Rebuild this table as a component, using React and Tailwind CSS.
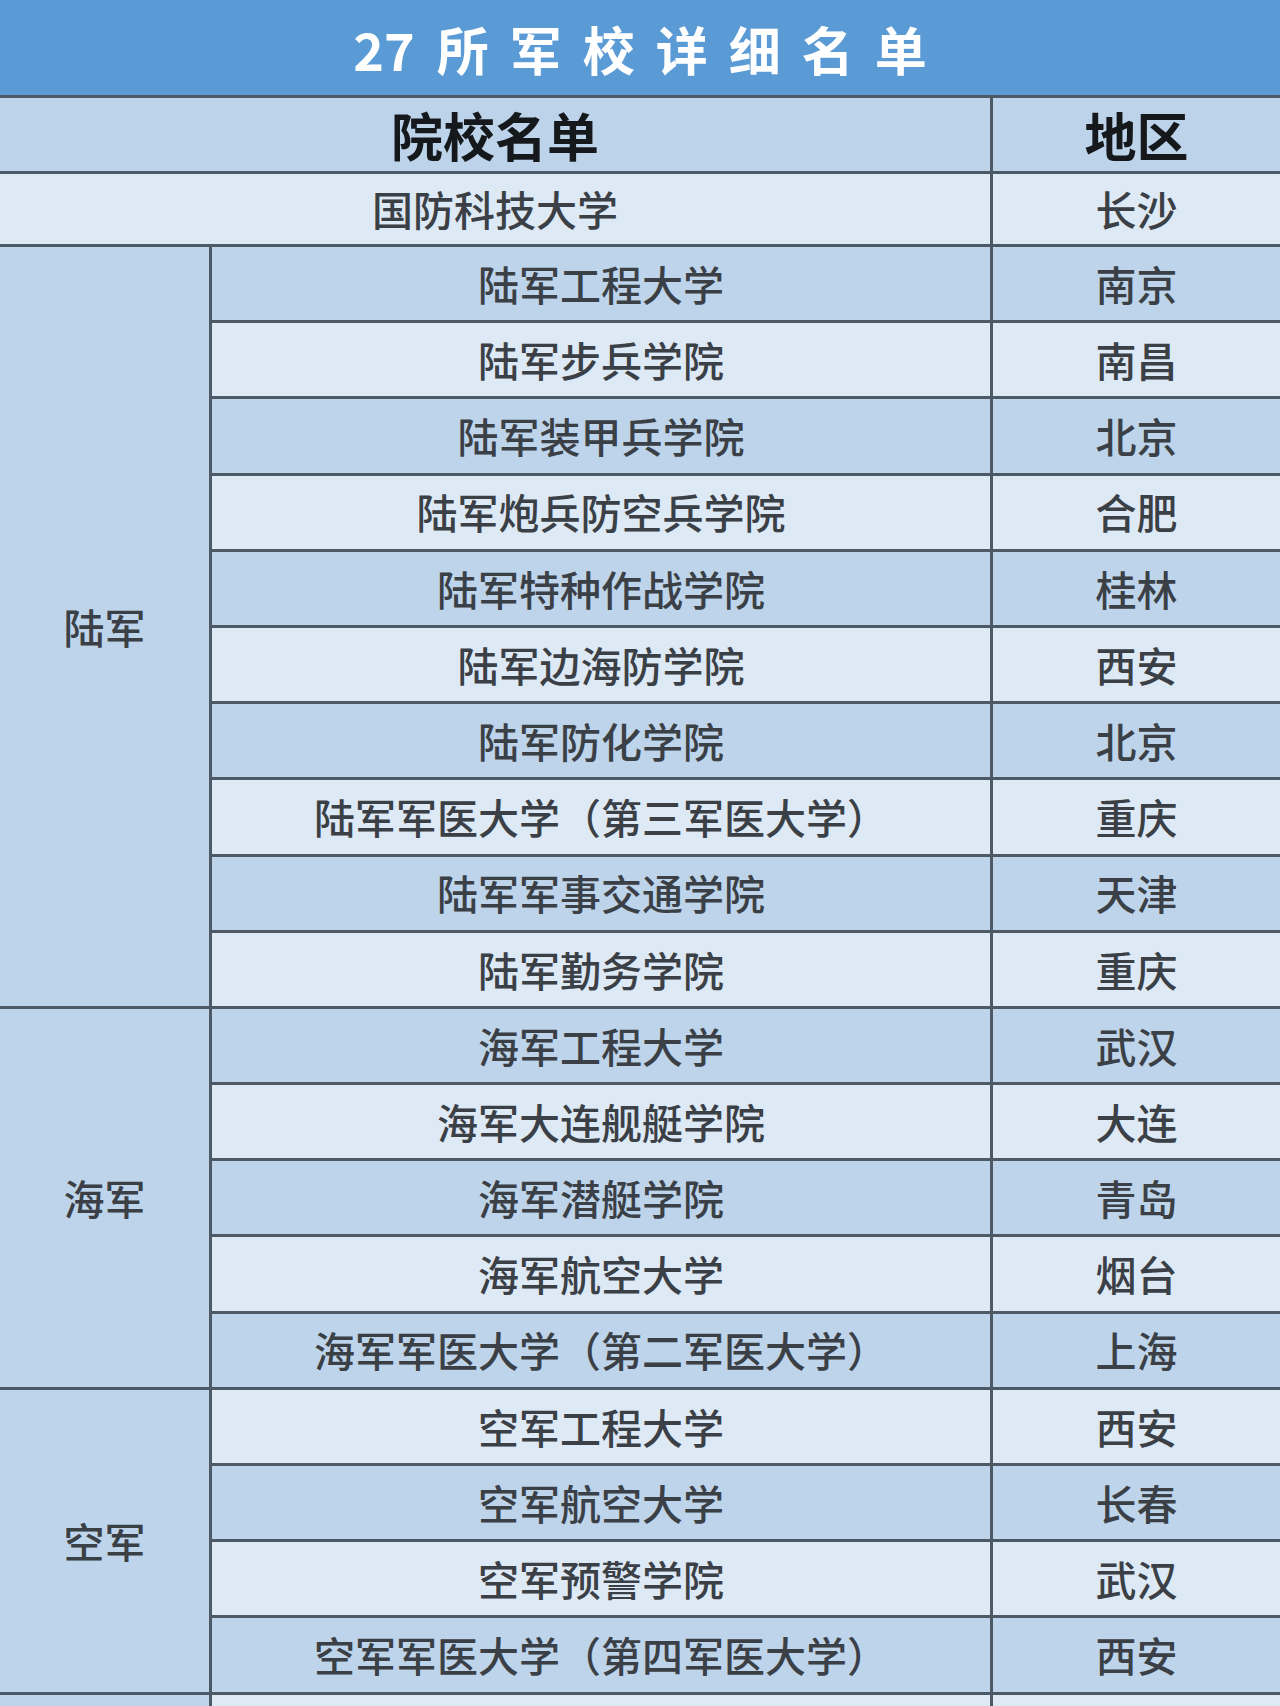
import React from "react";

const groups = [
  {
    label: "陆军",
    rows: [
      ["陆军工程大学", "南京"],
      ["陆军步兵学院", "南昌"],
      ["陆军装甲兵学院", "北京"],
      ["陆军炮兵防空兵学院", "合肥"],
      ["陆军特种作战学院", "桂林"],
      ["陆军边海防学院", "西安"],
      ["陆军防化学院", "北京"],
      ["陆军军医大学（第三军医大学）", "重庆"],
      ["陆军军事交通学院", "天津"],
      ["陆军勤务学院", "重庆"],
    ],
  },
  {
    label: "海军",
    rows: [
      ["海军工程大学", "武汉"],
      ["海军大连舰艇学院", "大连"],
      ["海军潜艇学院", "青岛"],
      ["海军航空大学", "烟台"],
      ["海军军医大学（第二军医大学）", "上海"],
    ],
  },
  {
    label: "空军",
    rows: [
      ["空军工程大学", "西安"],
      ["空军航空大学", "长春"],
      ["空军预警学院", "武汉"],
      ["空军军医大学（第四军医大学）", "西安"],
    ],
  },
  {
    label: "",
    rows: [["", ""]],
  },
];

const spanClass = {
  1: "row-span-1",
  4: "row-span-4",
  5: "row-span-5",
  10: "row-span-10",
};

export default function App() {
  let idx = 0;
  const cells = [];
  groups.forEach((g, gi) => {
    cells.push(
      <div
        key={"g" + gi}
        className={`${spanClass[g.rows.length]} bg-[#bdd4ea] flex items-center justify-center text-[41px] font-medium text-[#3b4046]`}
      >
        {g.label}
      </div>
    );
    g.rows.forEach((r, i) => {
      const dark = idx % 2 === 0;
      idx++;
      const bg = dark ? "bg-[#bdd4eb]" : "bg-[#dde9f5]";
      cells.push(
        <div
          key={"n" + gi + "-" + i}
          className={`${bg} flex items-center justify-center text-[41px] font-medium text-[#3b4046] whitespace-nowrap`}
        >
          {r[0]}
        </div>
      );
      cells.push(
        <div
          key={"r" + gi + "-" + i}
          className={`${bg} flex items-center justify-center text-[41px] font-medium text-[#3b4046]`}
        >
          {r[1]}
        </div>
      );
    });
  });

  return (
    <div
      className="w-[1280px] h-[1706px] overflow-hidden bg-[#4d5a66]"
      style={{ fontFamily: '"Noto Sans CJK SC", "Noto Sans", sans-serif' }}
    >
      <div className="flex flex-col gap-[3px]">
        <div className="h-[95px] bg-[#5b9bd5] flex items-center justify-center text-white font-bold text-[52px] pt-[2px]">
          <span>27</span>
          <span className="ml-[22px] tracking-[21px] mr-[-21px]">所军校详细名单</span>
        </div>
        <div className="grid grid-cols-[990px_1fr] gap-[3px]">
          <div className="h-[73px] bg-[#bcd3ea] flex items-center justify-center text-[52px] font-bold text-[#16191c]">
            院校名单
          </div>
          <div className="h-[73px] bg-[#bcd3ea] flex items-center justify-center text-[52px] font-bold text-[#16191c]">
            地区
          </div>
          <div className="h-[70px] bg-[#dde9f5] flex items-center justify-center text-[41px] font-medium text-[#3b4046]">
            国防科技大学
          </div>
          <div className="h-[70px] bg-[#dde9f5] flex items-center justify-center text-[41px] font-medium text-[#3b4046]">
            长沙
          </div>
        </div>
        <div className="grid grid-cols-[209px_778px_1fr] auto-rows-[73.2px] gap-[3px]">
          {cells}
        </div>
      </div>
    </div>
  );
}
